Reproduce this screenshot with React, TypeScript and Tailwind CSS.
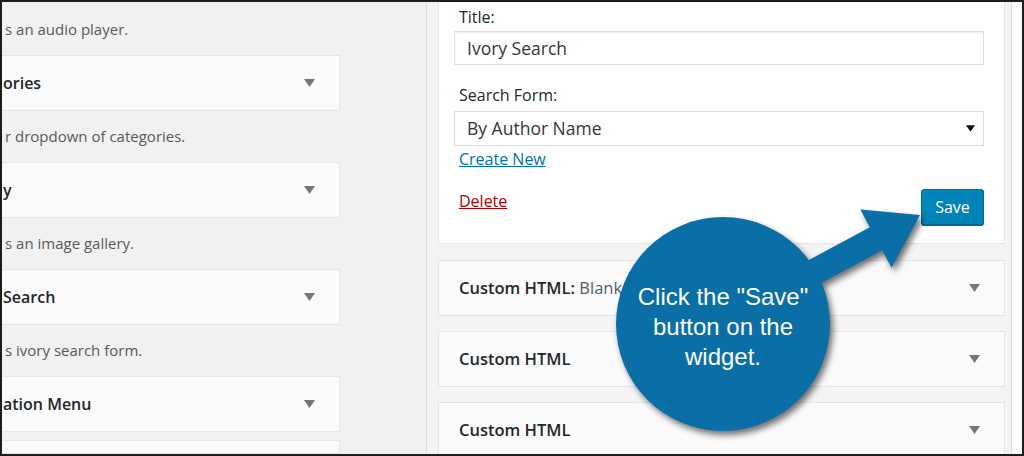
import React from "react";

const LEFT_ITEMS = [
  { desc: "s an audio player.", title: "ories" },
  { desc: "r dropdown of categories.", title: "y" },
  { desc: "s an image gallery.", title: "Search" },
  { desc: "s ivory search form.", title: "ation Menu" },
];

function Caret({ className }: { className?: string }) {
  return (
    <svg width="11" height="8" viewBox="0 0 11 8" className={className}>
      <path d="M0 0 L11 0 L5.5 8 Z" fill="currentColor" />
    </svg>
  );
}

function CollapsedRow({ title, extra }: { title: string; extra?: string }) {
  return (
    <div className="flex h-[56px] items-center justify-between border border-[#e5e5e5] bg-[#fafafa] pl-[20px] pr-[24px]">
      <span className="text-[16.5px] font-semibold text-[#23282d]">
        {title}
        {extra && <span className="font-normal text-[#555d66]">{extra}</span>}
      </span>
      <Caret className="text-[#72777c]" />
    </div>
  );
}

export default function App() {
  return (
    <div className="relative flex h-[456px] w-[1024px] overflow-hidden border-2 border-[#1c1c1c] bg-[#f1f1f1] font-['Open_Sans','Noto_Sans',sans-serif]">
      {/* left: available widgets (cut off) */}
      <div className="flex w-[424px] shrink-0 flex-col pt-[2px]">
        {LEFT_ITEMS.map((item) => (
          <div key={item.title} className="flex flex-col">
            <div className="flex h-[51px] items-center pl-[3px] text-[15px] text-[#5a5a5a]">
              {item.desc}
            </div>
            <div className="flex h-[56px] w-[338px] items-center justify-between border border-l-0 border-[#e5e5e5] bg-[#fafafa] pl-[1px] pr-[24px]">
              <span className="text-[16px] font-semibold text-[#23282d]">{item.title}</span>
              <Caret className="text-[#72777c]" />
            </div>
          </div>
        ))}
        <div className="mt-[8px] h-[20px] w-[338px] border border-l-0 border-[#e5e5e5] bg-[#fafafa]" />
      </div>

      {/* right: sidebar area */}
      <div className="flex w-[586px] shrink-0 flex-col border-x border-[#dcdcdc] bg-[#f4f4f4] pl-[11px] pr-[6px]">
        <div className="border border-t-0 border-[#e5e5e5] bg-white pb-[18px] pl-[15px] pr-[20px] pt-[5px]">
          <div className="pl-[5px] text-[16px] leading-[20px] text-[#23282d]">Title:</div>
          <div className="mt-[4px] flex h-[34px] items-center border border-[#dddddd] px-[12px] text-[17.5px] text-[#32373c] shadow-[inset_0_1px_2px_rgba(0,0,0,0.07)]">
            Ivory Search
          </div>
          <div className="mt-[20px] pl-[5px] text-[16px] leading-[20px] text-[#23282d]">Search Form:</div>
          <div className="mt-[6px] flex h-[35px] items-center justify-between border border-[#dddddd] pl-[12px] pr-[8px] text-[17.5px] text-[#32373c]">
            <span>By Author Name</span>
            <Caret className="h-[9px] w-[9px] text-[#111]" />
          </div>
          <div className="mt-[3px] pl-[5px] text-[16px] leading-[20px] text-[#0073aa] underline">Create New</div>
          <div className="mt-[20px] flex items-start justify-between">
            <span className="pl-[5px] pt-[2px] text-[16px] leading-[20px] text-[#a00] underline">Delete</span>
            <button className="h-[36px] w-[63px] rounded-[3px] border border-[#006799] bg-[#0085ba] text-[16px] text-white shadow-[0_1px_0_#006799]">
              Save
            </button>
          </div>
        </div>
        <div className="mt-[16px] flex flex-col gap-[15px]">
          <CollapsedRow title="Custom HTML:" extra=" Blank" />
          <CollapsedRow title="Custom HTML" />
          <CollapsedRow title="Custom HTML" />
        </div>
      </div>
      <div className="flex-1 bg-[#fbfbfb]" />

      {/* callout overlay */}
      <svg
        className="pointer-events-none absolute left-[-2px] top-[-2px] drop-shadow-[3px_4px_3px_rgba(0,0,0,0.55)]"
        width="1024"
        height="456"
        viewBox="0 0 1024 456"
      >
        <polygon
          points="783.8,273.5 869.8,227.2 860.4,209.6 920,215 891.6,267.8 882.2,250.2 796.2,296.5"
          fill="#0a6ea7"
        />
        <ellipse cx="723" cy="324" rx="107" ry="107" fill="#0a6ea7" />
      </svg>
      <div className="pointer-events-none absolute left-[601px] top-[280px] w-[240px] text-center font-['Liberation_Sans',Arial,sans-serif] text-[24px] leading-[30px] text-white">
        Click the "Save"
        <br />
        button on the
        <br />
        widget.
      </div>
    </div>
  );
}
